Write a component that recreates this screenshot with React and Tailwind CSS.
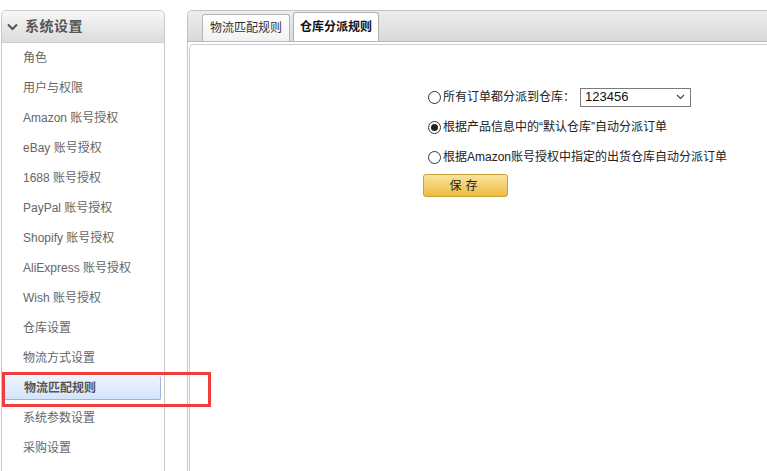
import React from "react";

const items = [
  "角色",
  "用户与权限",
  "Amazon 账号授权",
  "eBay 账号授权",
  "1688 账号授权",
  "PayPal 账号授权",
  "Shopify 账号授权",
  "AliExpress 账号授权",
  "Wish 账号授权",
  "仓库设置",
  "物流方式设置",
  "物流匹配规则",
  "系统参数设置",
  "采购设置",
];

const font = { fontFamily: '"Liberation Sans", Arial, "Noto Sans CJK SC", sans-serif' };

function Radio({ checked }) {
  return (
    <span className="relative inline-block w-[13px] h-[13px] rounded-full border border-[#333] bg-white mr-[2px] shrink-0">
      {checked && <span className="absolute left-[2px] top-[2px] w-[7px] h-[7px] rounded-full bg-[#222]" />}
    </span>
  );
}

export default function App() {
  return (
    <div className="relative w-[767px] h-[471px] overflow-hidden bg-white flex" style={font}>
      {/* Sidebar */}
      <div className="ml-[1px] mt-[10px] w-[164px] h-[470px] border border-[#c9c9c9] rounded-t-[5px] flex flex-col shrink-0">
        <div className="h-[32px] flex items-center pl-[5px] border-b border-[#cfcfcf] rounded-t-[5px] bg-gradient-to-b from-[#f7f7f7] to-[#dcdcdc]">
          <svg width="11" height="8" viewBox="0 0 11 8" className="mr-[7px]">
            <path d="M1 1.5 L5.5 6 L10 1.5" stroke="#555" strokeWidth="2" fill="none" />
          </svg>
          <span className="text-[14px] text-[#555] font-bold tracking-[0.5px]">系统设置</span>
        </div>
        {items.map((t, i) =>
          t === "物流匹配规则" ? (
            <div key={t} className="h-[30px] flex items-center">
              <div className="ml-[2px] w-[157px] h-[24px] flex items-center pl-[20px] text-[12px] font-bold text-[#555] rounded-[2px] border-r border-b border-[#9fb6d8] bg-gradient-to-b from-[#eef5fe] to-[#d3e4fb]">
                {t}
              </div>
            </div>
          ) : (
            <div key={t} className="h-[30px] flex items-center pl-[21px] text-[12px] text-[#666]">
              {t}
            </div>
          )
        )}
      </div>

      {/* Main panel */}
      <div className="ml-[22px] mt-[10px] flex-1 h-[470px] border-l border-t border-[#c4c4c4] rounded-tl-[5px] flex flex-col">
        <div className="h-[31px] border-b border-[#b9b9b9] rounded-tl-[5px] bg-gradient-to-b from-[#ededed] to-[#d9d9d9] flex items-end pl-[14px] gap-[3px]">
          <div className="h-[27px] w-[88px] flex items-center justify-center text-[12px] text-[#333] border border-b-0 border-[#b5b5b5] rounded-t-[3px] bg-gradient-to-b from-[#ffffff] to-[#f1f1f1]">
            物流匹配规则
          </div>
          <div className="h-[29px] w-[86px] flex items-center justify-center text-[12px] font-bold text-[#111] border border-b-0 border-[#b0b0b0] rounded-t-[3px] bg-white">
            仓库分派规则
          </div>
        </div>
        <div className="mt-[2px] ml-[1px] flex-1 border-l border-t border-[#cdcdcd] rounded-tl-[5px] pl-[238px] pt-[42px] text-[12px] text-[#222]">
          <div className="h-[20px] flex items-center">
            <Radio />
            <span>所有订单都分派到仓库：</span>
            <div className="ml-[5px] w-[111px] h-[19px] border border-[#7a7a7a] flex items-center justify-between pl-[4px] pr-[5px] text-[13px] text-[#111]">
              <span>123456</span>
              <svg width="9" height="6" viewBox="0 0 9 6">
                <path d="M1 1 L4.5 4.5 L8 1" stroke="#444" strokeWidth="1.2" fill="none" />
              </svg>
            </div>
          </div>
          <div className="h-[20px] mt-[10px] flex items-center">
            <Radio checked />
            <span>根据产品信息中的“默认仓库”自动分派订单</span>
          </div>
          <div className="h-[20px] mt-[10px] flex items-center">
            <Radio />
            <span>根据Amazon账号授权中指定的出货仓库自动分派订单</span>
          </div>
          <button className="mt-[7px] -ml-[5px] w-[85px] h-[23px] rounded-[3px] border border-[#c9a13a] bg-gradient-to-b from-[#fbe39a] to-[#eebb3e] text-[12px] text-[#222] tracking-[4px] flex items-center justify-center">
            保存
          </button>
        </div>
      </div>

      {/* annotation */}
      <div className="absolute left-[2px] top-[372px] w-[209px] h-[35px] border-[3px] border-[#f23b3b]" />
    </div>
  );
}
